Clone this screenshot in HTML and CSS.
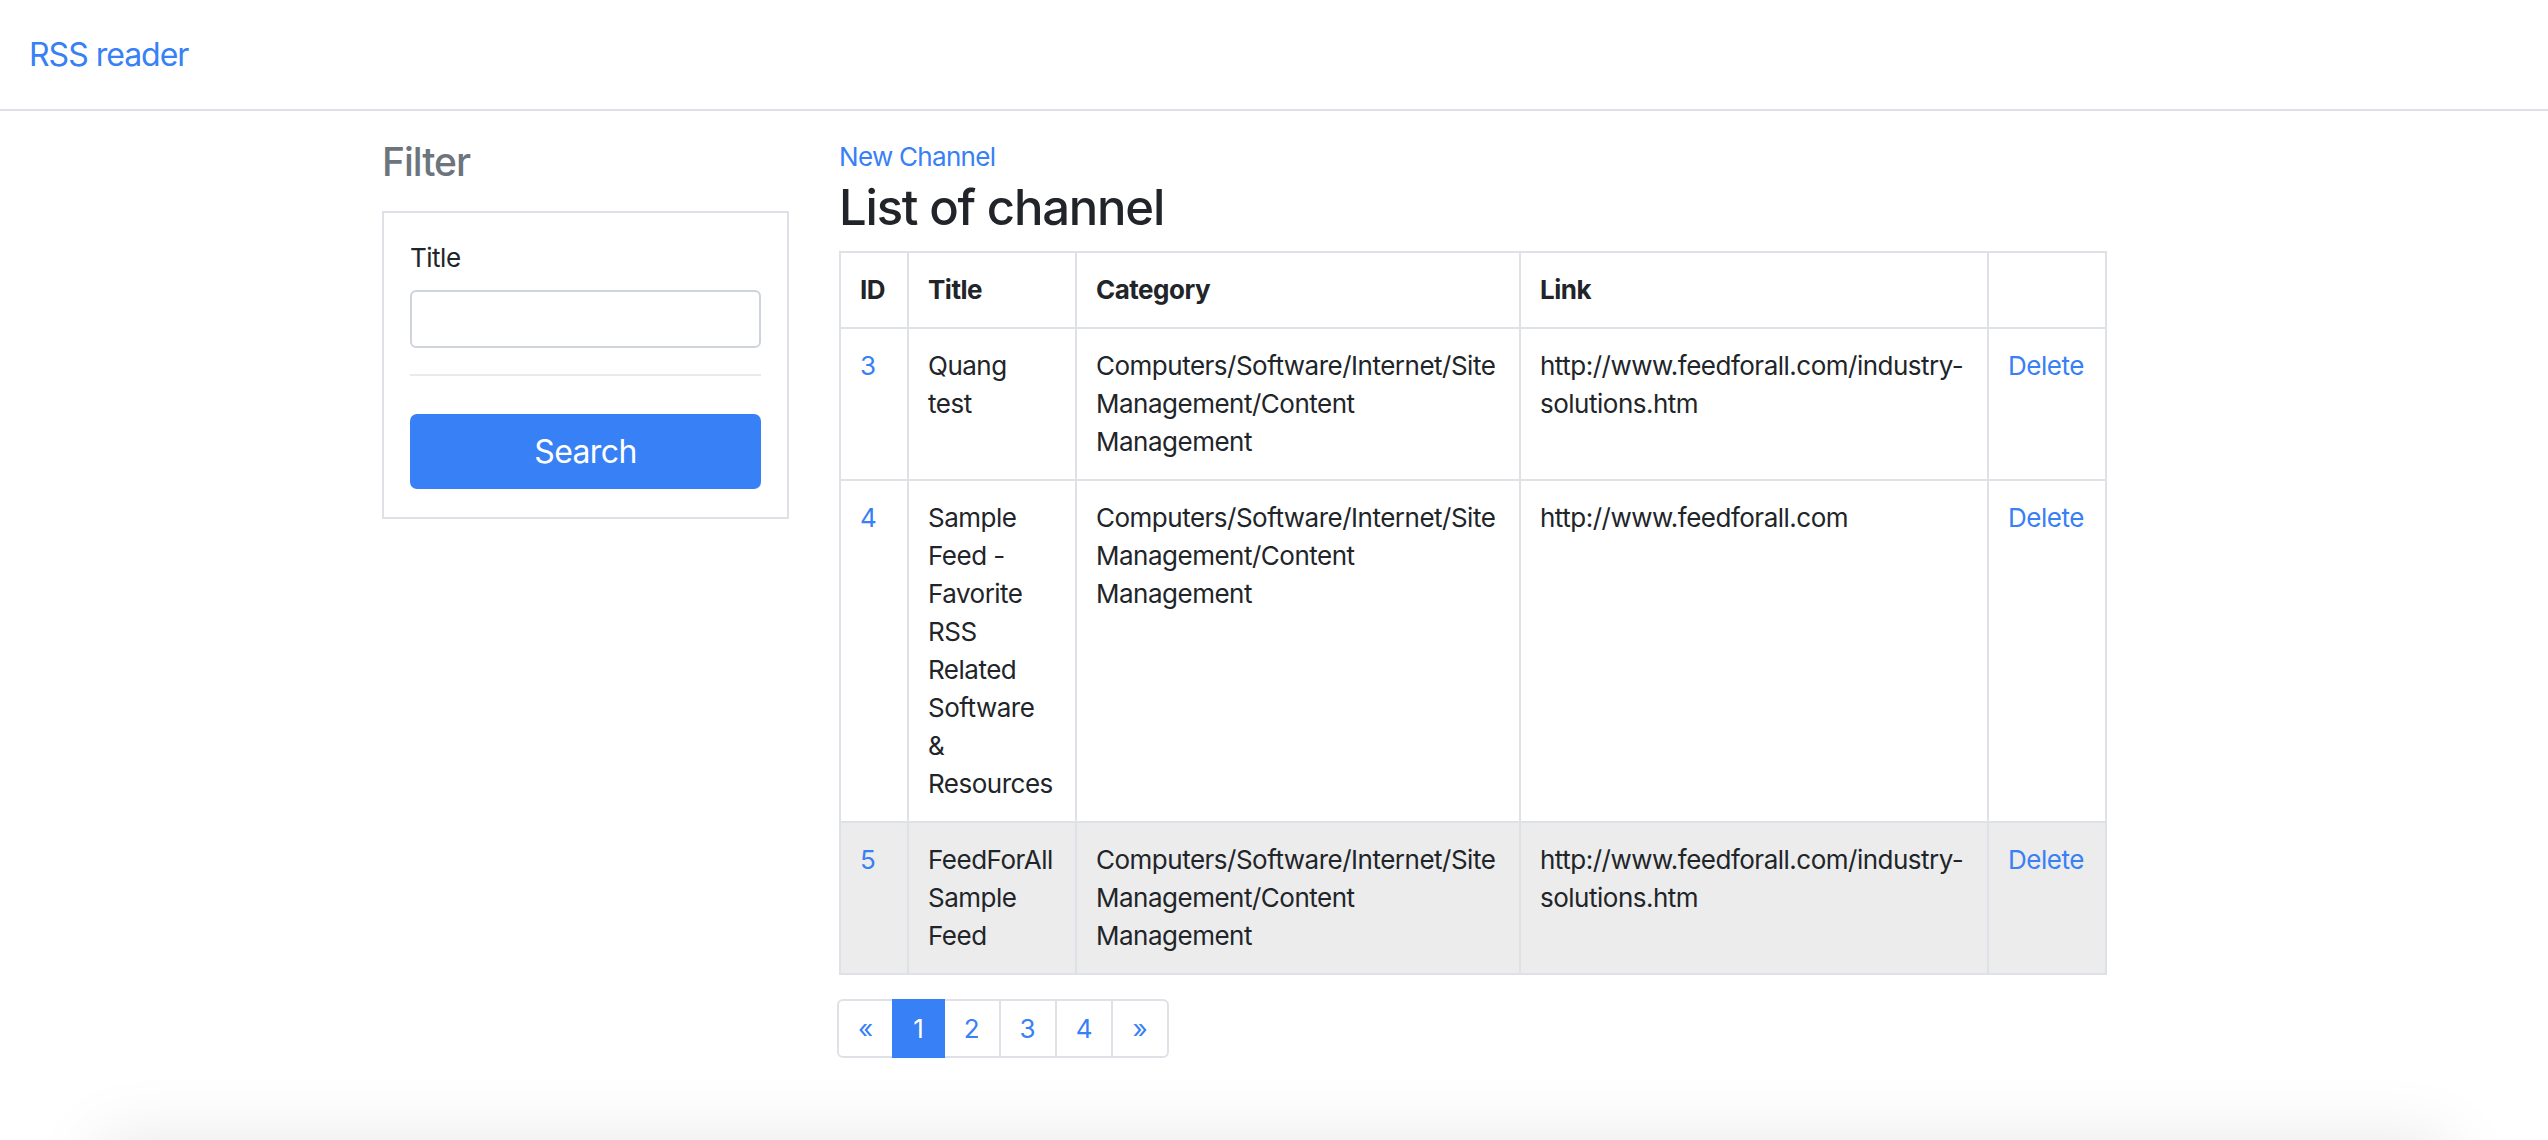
FILE: index.html
```html
<!DOCTYPE html>
<html lang="en">
<head>
<meta charset="utf-8">
<title>RSS reader</title>
<link rel="stylesheet" href="styles.css">
</head>
<body>
<nav class="navbar">
  <a class="brand" href="#">RSS reader</a>
</nav>
<main class="main">
  <aside class="sidebar">
    <h4 class="filter-title">Filter</h4>
    <form class="card">
      <label class="label" for="title">Title</label>
      <input class="input" id="title" type="text">
      <hr class="divider">
      <button class="btn" type="button">Search</button>
    </form>
  </aside>
  <section class="content">
    <a class="link new-link" href="#">New Channel</a>
    <h2 class="heading">List of channel</h2>
    <table class="table">
      <colgroup>
        <col class="c-id"><col class="c-title"><col class="c-cat"><col class="c-link"><col class="c-act">
      </colgroup>
      <thead>
        <tr><th>ID</th><th>Title</th><th>Category</th><th>Link</th><th></th></tr>
      </thead>
      <tbody>
        <tr>
          <td><a class="link" href="#">3</a></td>
          <td>Quang test</td>
          <td>Computers/Software/Internet/Site Management/Content Management</td>
          <td>http://www.feedforall.com/industry-solutions.htm</td>
          <td><a class="link" href="#">Delete</a></td>
        </tr>
        <tr>
          <td><a class="link" href="#">4</a></td>
          <td>Sample Feed - Favorite RSS Related Software &amp; Resources</td>
          <td>Computers/Software/Internet/Site Management/Content Management</td>
          <td>http://www.feedforall.com</td>
          <td><a class="link" href="#">Delete</a></td>
        </tr>
        <tr class="hovered">
          <td><a class="link" href="#">5</a></td>
          <td>FeedForAll Sample Feed</td>
          <td>Computers/Software/Internet/Site Management/Content Management</td>
          <td>http://www.feedforall.com/industry-solutions.htm</td>
          <td><a class="link" href="#">Delete</a></td>
        </tr>
      </tbody>
    </table>
    <ul class="pagination">
      <li class="page"><a href="#">«</a></li>
      <li class="page active"><a href="#">1</a></li>
      <li class="page"><a href="#">2</a></li>
      <li class="page"><a href="#">3</a></li>
      <li class="page"><a href="#">4</a></li>
      <li class="page"><a href="#">»</a></li>
    </ul>
  </section>
</main>
<footer class="footer"></footer>
</body>
</html>
```
FILE: styles.css
```css
* { box-sizing: border-box; }
html, body { margin: 0; padding: 0; }
body {
  font-family: Inter, "Noto Sans", sans-serif;
  font-size: 26px;
  line-height: 38px;
  letter-spacing: -0.5px;
  color: #212529;
  background: #fff;
  overflow: hidden;
}
a { text-decoration: none; color: #3880f5; }
.navbar {
  height: 111px;
  border-bottom: 2px solid #dee2e6;
  display: flex;
  align-items: center;
  padding-left: 29px;
}
.brand { font-size: 32px; line-height: 48px; letter-spacing: -1px; }
.main {
  display: flex;
  padding: 27px 0 0 382px;
  gap: 50px;
  align-items: flex-start;
}
.sidebar { width: 407px; }
.filter-title {
  margin: 0 0 26px;
  font-size: 39px;
  line-height: 47px;
  font-weight: 500;
  letter-spacing: -1px;
  color: #6c757d;
}
.card {
  border: 2px solid #dee2e6;
  padding: 26px 26px 28px;
  display: flex;
  flex-direction: column;
  margin: 0;
}
.label { display: block; margin-bottom: 13px; }
.input {
  height: 58px;
  border: 2px solid #ced4da;
  border-radius: 6px;
  font: inherit;
  padding: 0 19px;
  outline: none;
}
.divider {
  margin: 26px 0 38px;
  border: 0;
  border-top: 2px solid #e9eaeb;
  width: 100%;
}
.btn {
  height: 75px;
  border: 0;
  border-radius: 7px;
  background: #3880f5;
  color: #fff;
  font-family: inherit;
  font-size: 32px;
  letter-spacing: -0.6px;
  font-weight: 400;
}
.content { width: 1266px; display: flex; flex-direction: column; align-items: flex-start; }
.new-link { display: block; letter-spacing: -0.7px; }
.heading {
  margin: 2px 0 13px;
  font-size: 49px;
  line-height: 60px;
  font-weight: 500;
  letter-spacing: -1.2px;
}
.table {
  width: 1266px;
  table-layout: fixed;
  border-collapse: collapse;
  margin: 0;
}
.c-id { width: 68px; }
.c-title { width: 168px; }
.c-cat { width: 444px; }
.c-link { width: 468px; }
.c-act { width: 118px; }
.table th, .table td {
  border: 2px solid #dee2e6;
  padding: 18px 19px;
  vertical-align: top;
  text-align: left;
}
.table th { font-weight: 700; }
.table .hovered td { background: #ececec; }
.pagination {
  list-style: none;
  display: flex;
  margin: 24px 0 0 -2px;
  padding: 0;
  letter-spacing: 0;
}
.page a {
  display: block;
  padding: 11px 19px;
  line-height: 33px;
  border: 2px solid #dee2e6;
  margin-left: -2px;
  background: #fff;
}
.page:first-child a { margin-left: 0; border-radius: 6px 0 0 6px; }
.page:last-child a { border-radius: 0 6px 6px 0; }
.page.active a { background: #3880f5; border-color: #3880f5; color: #fff; position: relative; }
.footer {
  margin: 83px 100px 0;
  height: 200px;
  box-shadow: 0 0 70px rgba(0, 0, 0, 0.1);
}
```
